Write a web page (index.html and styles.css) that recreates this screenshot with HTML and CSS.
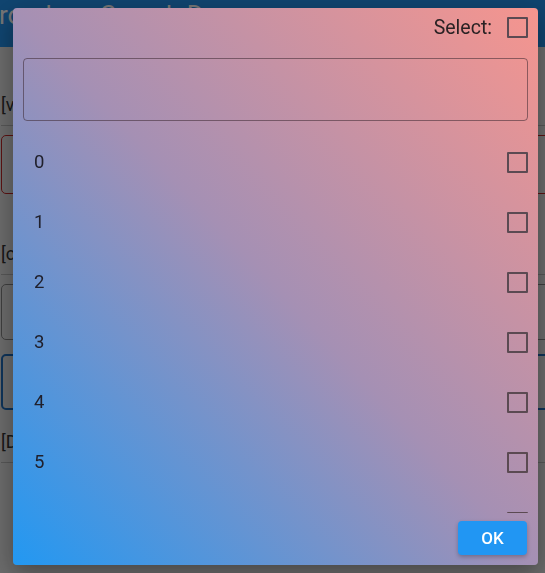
FILE: index.html
```html
<!DOCTYPE html>
<html>
<head>
<meta charset="utf-8">
<link rel="stylesheet" href="styles.css">
</head>
<body>
<div class="app">
  <header class="appbar"><span class="title">DropdownSearch Demo</span></header>
  <main class="form">
    <div class="label label-first">[value]</div>
    <div class="divider"></div>
    <div class="box box-red"></div>
    <div class="label label-second">[chips]</div>
    <div class="divider"></div>
    <div class="box box-gray"></div>
    <div class="box box-blue"></div>
    <div class="label label-third">[Dialog]</div>
    <div class="divider"></div>
  </main>
</div>
<div class="scrim"></div>
<div class="dialog">
  <div class="dialog-head">
    <span class="select-label">Select:</span>
    <span class="checkbox"></span>
  </div>
  <div class="search-box"></div>
  <div class="list">
    <div class="row"><span class="num">0</span><span class="checkbox"></span></div>
    <div class="row"><span class="num">1</span><span class="checkbox"></span></div>
    <div class="row"><span class="num">2</span><span class="checkbox"></span></div>
    <div class="row"><span class="num">3</span><span class="checkbox"></span></div>
    <div class="row"><span class="num">4</span><span class="checkbox"></span></div>
    <div class="row"><span class="num">5</span><span class="checkbox"></span></div>
    <div class="row"><span class="num">6</span><span class="checkbox"></span></div>
  </div>
  <div class="dialog-foot">
    <button class="ok-btn">OK</button>
  </div>
</div>
</body>
</html>
```

FILE: styles.css
```css
* { box-sizing: border-box; }
html, body {
  margin: 0;
  width: 545px;
  height: 573px;
  overflow: hidden;
}
body {
  background: #e8e8e8;
  font-family: Roboto, "Noto Sans", sans-serif;
}
.appbar {
  height: 47px;
  background: #2394f1;
  overflow: hidden;
  white-space: nowrap;
}
.title {
  display: block;
  margin-left: -18px;
  font-size: 26px;
  line-height: 30px;
  color: #fff;
}
.form {
  padding-left: 1px;
  overflow: hidden;
}
.label {
  height: 24px;
  line-height: 24px;
  font-size: 18px;
  color: #333;
}
.label-first { margin-top: 46px; }
.label-second { margin-top: 48px; }
.label-third { margin-top: 20px; }
.divider {
  height: 1px;
  margin-top: 8px;
  background: #bbb;
  width: 600px;
}
.box {
  width: 620px;
  border-radius: 5px;
}
.box-red {
  margin-top: 9px;
  height: 59px;
  border: 1.5px solid #c62828;
}
.box-gray {
  margin-top: 9px;
  height: 56px;
  border: 1px solid #888;
}
.box-blue {
  margin-top: 14px;
  height: 56px;
  border: 2px solid #1f6fc0;
}
.scrim {
  position: fixed;
  inset: 0;
  background: rgba(0, 0, 0, 0.54);
}
.dialog {
  position: fixed;
  left: 13px;
  top: 8px;
  width: 525px;
  height: 557px;
  border-radius: 4px;
  padding: 9px 10px 10px 10px;
  display: flex;
  flex-direction: column;
  background: linear-gradient(to top right, #2298f2 0%, #a590b4 50%, #f6958e 100%);
  box-shadow: 0 8px 24px rgba(0, 0, 0, 0.35);
}
.dialog-head {
  height: 21px;
  display: flex;
  justify-content: flex-end;
  align-items: center;
  gap: 15px;
}
.select-label {
  font-size: 19.5px;
  color: #2a2224;
}
.checkbox {
  display: block;
  width: 21px;
  height: 21px;
  border: 2.5px solid #5b4a52;
  border-radius: 1px;
  flex: none;
}
.search-box {
  margin-top: 20px;
  height: 63px;
  border: 1px solid rgba(60, 40, 50, 0.55);
  border-radius: 4px;
}
.list {
  margin-top: 11px;
  height: 381px;
  overflow: hidden;
}
.row {
  height: 60px;
  display: flex;
  align-items: center;
  justify-content: space-between;
  padding-left: 11px;
}
.num {
  font-size: 18.5px;
  color: #20202c;
  margin-top: -1px;
}
.dialog-foot {
  margin-top: 8px;
  display: flex;
  justify-content: flex-end;
  padding-right: 1px;
}
.ok-btn {
  width: 69px;
  height: 34px;
  border: none;
  border-radius: 4px;
  background: #2196f3;
  color: #fff;
  font-family: Roboto, sans-serif;
  font-size: 17px;
  font-weight: 500;
  box-shadow: 0 2px 4px rgba(0, 0, 0, 0.25);
}
```
